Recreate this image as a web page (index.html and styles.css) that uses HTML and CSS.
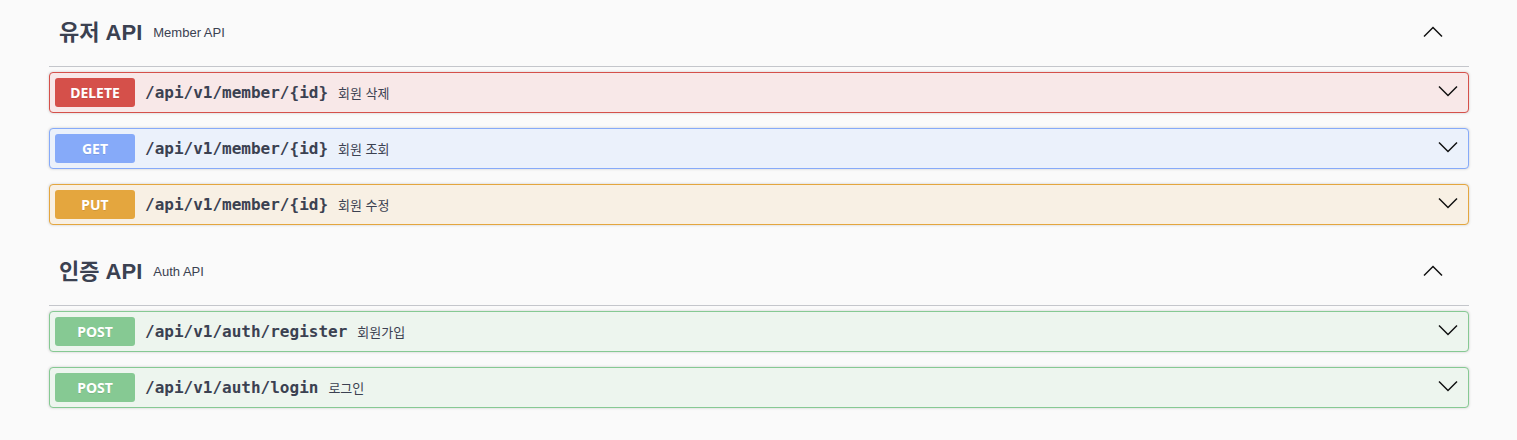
FILE: index.html
```html
<!DOCTYPE html>
<html lang="ko">
<head>
<meta charset="utf-8">
<title>API</title>
<link rel="stylesheet" href="styles.css">
</head>
<body>
<div class="wrapper">
  <section class="tag-section">
    <div class="tag-header">
      <h3 class="tag-title">유저 API</h3>
      <span class="tag-desc">Member API</span>
      <svg class="chev-up" width="20" height="12" viewBox="0 0 20 12"><polyline points="1,10.5 10,1.5 19,10.5" fill="none" stroke="#111" stroke-width="1.5"/></svg>
    </div>
    <div class="op op-delete">
      <span class="method">DELETE</span>
      <span class="path">/api/v1/member/{id}</span>
      <span class="desc">회원 삭제</span>
      <svg class="chev-down" width="20" height="12" viewBox="0 0 20 12"><polyline points="1,1.5 10,10.5 19,1.5" fill="none" stroke="#111" stroke-width="1.5"/></svg>
    </div>
    <div class="op op-get">
      <span class="method">GET</span>
      <span class="path">/api/v1/member/{id}</span>
      <span class="desc">회원 조회</span>
      <svg class="chev-down" width="20" height="12" viewBox="0 0 20 12"><polyline points="1,1.5 10,10.5 19,1.5" fill="none" stroke="#111" stroke-width="1.5"/></svg>
    </div>
    <div class="op op-put">
      <span class="method">PUT</span>
      <span class="path">/api/v1/member/{id}</span>
      <span class="desc">회원 수정</span>
      <svg class="chev-down" width="20" height="12" viewBox="0 0 20 12"><polyline points="1,1.5 10,10.5 19,1.5" fill="none" stroke="#111" stroke-width="1.5"/></svg>
    </div>
  </section>
  <section class="tag-section">
    <div class="tag-header">
      <h3 class="tag-title">인증 API</h3>
      <span class="tag-desc">Auth API</span>
      <svg class="chev-up" width="20" height="12" viewBox="0 0 20 12"><polyline points="1,10.5 10,1.5 19,10.5" fill="none" stroke="#111" stroke-width="1.5"/></svg>
    </div>
    <div class="op op-post">
      <span class="method">POST</span>
      <span class="path">/api/v1/auth/register</span>
      <span class="desc">회원가입</span>
      <svg class="chev-down" width="20" height="12" viewBox="0 0 20 12"><polyline points="1,1.5 10,10.5 19,1.5" fill="none" stroke="#111" stroke-width="1.5"/></svg>
    </div>
    <div class="op op-post">
      <span class="method">POST</span>
      <span class="path">/api/v1/auth/login</span>
      <span class="desc">로그인</span>
      <svg class="chev-down" width="20" height="12" viewBox="0 0 20 12"><polyline points="1,1.5 10,10.5 19,1.5" fill="none" stroke="#111" stroke-width="1.5"/></svg>
    </div>
  </section>
</div>
</body>
</html>
```

FILE: styles.css
```css
* { box-sizing: border-box; }
html, body {
  margin: 0;
  padding: 0;
  background: #fafafa;
}
body {
  font-family: "Liberation Sans", "Noto Sans CJK KR", sans-serif;
  color: #3b4151;
}
.wrapper {
  padding: 1px 48px 0 49px;
}
.tag-header {
  display: flex;
  align-items: center;
  height: 66px;
  padding: 0 26px 0 10px;
  border-bottom: 1px solid #c4c6cb;
  margin-bottom: 5px;
}
.tag-title {
  margin: -2px 0 0 0;
  font-size: 22px;
  font-weight: 700;
  font-family: "Liberation Sans", "Noto Sans CJK KR", sans-serif;
  color: #3b4151;
  line-height: 1;
}
.tag-desc {
  font-size: 13px;
  margin-left: 11px;
  margin-top: -2px;
  flex: 1;
  color: #3b4151;
}
.chev-up {
  display: block;
  margin-top: -3px;
}
.op {
  display: flex;
  align-items: center;
  height: 41px;
  padding: 0 10px 0 5px;
  border: 1px solid;
  border-radius: 4px;
  margin-bottom: 15px;
  box-shadow: 0 0 3px rgba(0,0,0,.19);
}
.method {
  width: 80px;
  height: 29px;
  border-radius: 3px;
  display: flex;
  align-items: center;
  justify-content: center;
  color: #fff;
  font-weight: 700;
  font-size: 14px;
  text-shadow: 0 1px 0 rgba(0,0,0,.1);
  font-family: "Noto Sans", sans-serif;
}
.path {
  margin-left: 10px;
  font-family: "DejaVu Sans Mono", monospace;
  font-weight: 700;
  font-size: 16px;
  color: #3b4151;
}
.desc {
  margin-left: 10px;
  margin-top: -1px;
  font-size: 13px;
  flex: 1;
  color: #3b4151;
}
.chev-down {
  display: block;
  margin-top: -4px;
}
.op-delete { background: #f8e8e8; border-color: #d5504a; }
.op-delete .method { background: #d5504a; }
.op-get { background: #ebf1fb; border-color: #86aaf9; }
.op-get .method { background: #86aaf9; }
.op-put { background: #f8f0e4; border-color: #e4a63e; }
.op-put .method { background: #e4a63e; }
.op-post { background: #edf5ee; border-color: #86c993; }
.op-post .method { background: #86c993; }
```
